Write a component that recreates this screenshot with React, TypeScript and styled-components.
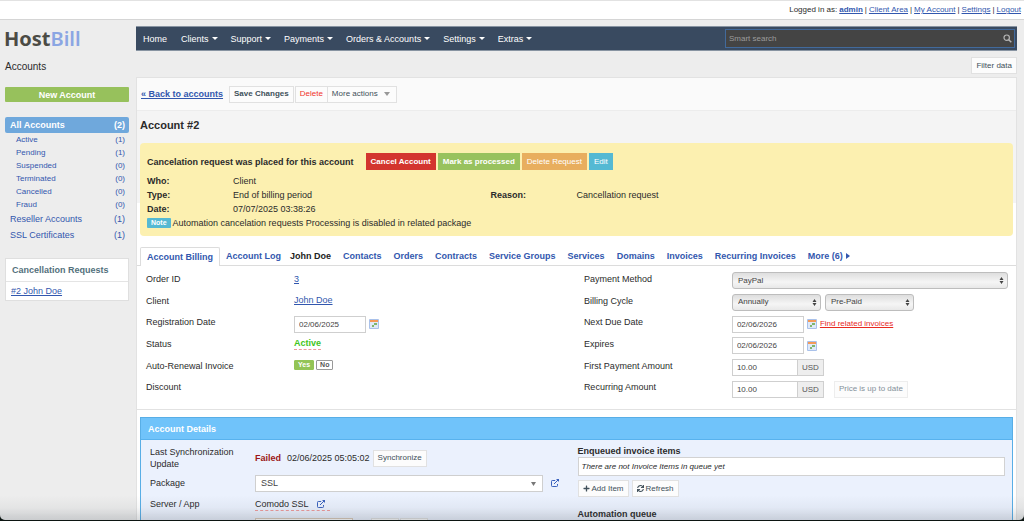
import React from "react";
import styled, { createGlobalStyle, css } from "styled-components";
import { FaPlus, FaSync } from "react-icons/fa";

const GlobalStyle = createGlobalStyle`
  * { box-sizing: border-box; }
  html, body { margin: 0; padding: 0; }
  body {
    background: #ededed;
    color: #2b2b2b;
    font: 9px/12px "Liberation Sans", Arial, sans-serif;
  }
  button, input, select { font: inherit; margin: 0; }
  a { color: #3257ae; }
`;

const Page = styled.div`
  display: flex;
  flex-direction: column;
  height: 100vh;
  overflow: hidden;
`;

const TopBar = styled.header`
  flex: none;
  display: flex;
  justify-content: flex-end;
  gap: 2px;
  height: 20px;
  padding: 3px 3px 0 0;
  background: #fff;
  border-top: 1px solid #e2e2e2;
  border-bottom: 1px solid #d5d5d5;
  font-size: 8px;
`;

const Columns = styled.div`
  display: flex;
  flex: 1;
  min-height: 0;
`;

const Sidebar = styled.aside`
  flex: none;
  width: 136px;
  padding: 7px 7px 0 5px;
`;

const Logo = styled.div`
  height: 24px;
  margin-left: -1px;
  color: #4b4b45;
  font: 700 20px/24px "Noto Sans", "Open Sans", sans-serif;
  span { color: #8ba6e3; font-weight: 600; }
`;

const SideTitle = styled.h2`
  margin: 10px 0 14px;
  font-size: 10px;
  line-height: 12px;
  font-weight: 400;
`;

const NewAccount = styled.button`
  display: block;
  width: 100%;
  height: 15px;
  padding: 0;
  border: 0;
  border-radius: 1px;
  background: #97c15c;
  color: #fff;
  font-weight: 700;
`;

const SideNav = styled.nav`
  margin-top: 15px;
`;

const SideLink = styled.a<{ $kind: "active" | "sub" | "top" }>`
  display: flex;
  justify-content: space-between;
  align-items: center;
  padding: 0 4px 0 5px;
  height: 16px;
  text-decoration: none;
  ${(p) => p.$kind === "active" && css`
    background: #6fa8dc;
    color: #fff;
    font-weight: 700;
    border-radius: 2px;
  `}
  ${(p) => p.$kind === "sub" && css`
    height: 13px;
    padding-left: 11px;
    font-size: 8px;
  `}
`;

const RequestCard = styled.section`
  margin-top: 15px;
  border: 1px solid #dfdfdf;
  background: #fff;
  h3 {
    margin: 0;
    padding: 5px 6px;
    color: #53707c;
    font-size: 9px;
    line-height: 12px;
    border-bottom: 1px solid #e4e4e4;
  }
  a { display: block; padding: 3px 5px; }
`;

const Main = styled.main`
  flex: 1;
  min-width: 0;
  display: flex;
  flex-direction: column;
  padding: 6px 7px 0 0;
`;

const NavBar = styled.nav`
  flex: none;
  display: flex;
  align-items: center;
  height: 25px;
  padding: 0 2px 0 7px;
  background: #394a60;
  border-top: 1px solid #8894a2;
  border-bottom: 1px solid #8894a2;
`;

const NavLink = styled.a`
  display: flex;
  align-items: center;
  gap: 3px;
  margin-right: 13px;
  color: #fff;
  text-decoration: none;
  white-space: nowrap;
  &:first-child { margin-right: 14px; }
`;

const Caret = styled.span`
  border: 3px solid transparent;
  border-top-color: currentColor;
  border-bottom: 0;
`;

const SearchBox = styled.label`
  display: flex;
  align-items: center;
  width: 290px;
  height: 19px;
  margin-left: auto;
  padding: 0 2px 0 3px;
  background: #444;
  border: 1px solid #426a9c;
  color: #b5b5b5;
  input {
    flex: 1;
    min-width: 0;
    padding: 0;
    border: 0;
    outline: 0;
    background: transparent;
    color: #ccc;
    font-size: 8px;
  }
  input::placeholder { color: #9c9c9c; opacity: 1; }
`;

const FilterRow = styled.div`
  flex: none;
  display: flex;
  justify-content: flex-end;
  padding: 6px 0 3px;
`;

const Button = styled.button<{ $tone?: "bold" | "danger" | "muted" | "menu" }>`
  display: inline-flex;
  align-items: center;
  justify-content: center;
  gap: 2px;
  height: 17px;
  padding: 0 4px;
  background: #fcfcfc;
  border: 1px solid #e1e1e1;
  color: #40505a;
  font-size: 8px;
  white-space: nowrap;
  ${(p) => p.$tone === "bold" && css`font-weight: 700;`}
  ${(p) => p.$tone === "danger" && css`color: #f0322b;`}
  ${(p) => p.$tone === "muted" && css`color: #84909a; border-color: #ededed;`}
  ${(p) => p.$tone === "menu" && css`gap: 6px; padding-right: 6px; margin-left: -1px;`}
`;

const GreyCaret = styled.span`
  border: 3px solid transparent;
  border-top: 4px solid #999;
  border-bottom: 0;
`;

const Panel = styled.div`
  flex: 1;
  min-height: 0;
  background: #fff;
  border: 1px solid #e2e2e2;
  border-bottom: 0;
`;

const Toolbar = styled.div`
  display: flex;
  align-items: center;
  height: 33px;
  padding: 0 4px;
  background: #fafafa;
  border-bottom: 1px solid #ececec;
`;

const BackLink = styled.a`
  margin-right: 6px;
  font-weight: 700;
`;

const ButtonGroup = styled.div`
  display: flex;
  margin-left: 1px;
`;

const Intro = styled.div`
  padding: 0 3px;
  background: linear-gradient(#f4f4f4 92px, #fff 92px);
`;

const Title = styled.h1`
  margin: 0;
  padding: 7px 0 11px;
  font-size: 11px;
  line-height: 14px;
`;

const Notice = styled.section`
  height: 93px;
  padding: 10px 7px 0;
  background: #fcf0b0;
  border-radius: 4px;
`;

const NoticeHead = styled.div`
  display: flex;
  align-items: center;
  gap: 2px;
  margin-bottom: 4px;
  strong { margin-right: 10px; }
`;

const SolidButton = styled.button<{ $color: string; $bold?: boolean }>`
  height: 17px;
  padding: 0 5px;
  border: 0;
  background: ${(p) => p.$color};
  color: #fff;
  font-size: 8px;
  font-weight: ${(p) => (p.$bold ? 700 : 400)};
`;

const Facts = styled.dl`
  display: grid;
  grid-template-columns: 10fr 30fr 10fr 50fr;
  grid-auto-rows: 14px;
  align-items: center;
  margin: 0;
  dt { font-weight: 700; }
  dd { margin: 0; }
  dd[data-wide] { grid-column: 2 / -1; }
`;

const Note = styled.p`
  display: flex;
  align-items: center;
  gap: 2px;
  height: 14px;
  margin: 0;
  span {
    padding: 0 4px;
    background: #55b9d3;
    border-radius: 1px;
    color: #fff;
    font-weight: 700;
    font-size: 7px;
    line-height: 10px;
  }
`;

const Tabs = styled.nav`
  display: flex;
  align-items: center;
  height: 19px;
  margin-top: 11px;
  padding-left: 3px;
  border-bottom: 1px solid #dcdcdc;
`;

const Tab = styled.a<{ $state?: "current" | "tight" | "plain" }>`
  display: flex;
  align-items: center;
  gap: 3px;
  margin-right: 12px;
  font-weight: 700;
  text-decoration: none;
  white-space: nowrap;
  ${(p) => p.$state === "plain" && css`color: #222;`}
  ${(p) => p.$state === "tight" && css`margin-right: 9px;`}
  ${(p) => p.$state === "current" && css`
    height: 19px;
    margin: 0 6px -1px 0;
    padding: 0 6px;
    background: #fff;
    border: 1px solid #dcdcdc;
    border-bottom: 0;
    border-radius: 2px 2px 0 0;
  `}
`;

const Billing = styled.form`
  display: grid;
  grid-template-columns: 103fr 100fr;
  padding: 2px 7px 11px 9px;
  border-bottom: 1px solid #e2e2e2;
`;

const FieldList = styled.div`
  display: grid;
  grid-template-columns: 148px minmax(0, 1fr);
  grid-template-rows: repeat(6, 1fr);
  height: 130px;
`;

const FieldLabel = styled.label`
  align-self: start;
  padding-top: 5px;
`;

const Field = styled.div<{ $text?: boolean }>`
  display: flex;
  align-items: center;
  gap: 3px;
  padding-top: ${(p) => (p.$text ? 0 : 4)}px;
`;

const TextInput = styled.input`
  width: 72px;
  height: 17px;
  padding: 0 4px;
  border: 1px solid #cfcfcf;
  background: #fff;
  color: #444;
  font-size: 8px;
`;

const SelectWrap = styled.span<{ $grow?: boolean; $white?: boolean }>`
  position: relative;
  display: block;
  flex: ${(p) => (p.$grow ? "1" : "none")};
  width: 89px;
  margin-right: 1px;
  height: 17px;
  svg { position: absolute; right: 4px; top: 4px; pointer-events: none; }
  select {
    appearance: none;
    display: block;
    width: 100%;
    height: 17px;
    padding: 0 5px;
    border: 1px solid ${(p) => (p.$white ? "#cfcfcf" : "#bdbdbd")};
    border-radius: ${(p) => (p.$white ? 0 : 3)}px;
    background: ${(p) => (p.$white ? "#fff" : "linear-gradient(#dedede, #f5f5f5 60%, #e8e8e8)")};
    color: #444;
    font-size: ${(p) => (p.$white ? 9 : 8)}px;
  }
`;

const Amount = styled.div`
  display: flex;
  margin-right: 7px;
  ${TextInput} { width: 66px; }
  span {
    width: 27px;
    height: 17px;
    margin-left: -1px;
    border: 1px solid #cfcfcf;
    background: #eee;
    color: #555;
    font-size: 8px;
    line-height: 15px;
    text-align: center;
  }
`;

const RelatedLink = styled.a`
  color: #e8291f;
  font-size: 8px;
`;

const Status = styled.strong`
  color: #3fc51d;
  border-bottom: 1px dashed #ee9a9a;
`;

const Toggle = styled.button<{ $on?: boolean }>`
  height: 10px;
  margin-right: -1px;
  padding: 0 3px;
  border: 1px solid ${(p) => (p.$on ? "#93c456" : "#999")};
  border-radius: 1px;
  background: ${(p) => (p.$on ? "#93c456" : "#fff")};
  color: ${(p) => (p.$on ? "#fff" : "#555")};
  font-size: 7px;
  line-height: 8px;
  font-weight: 700;
`;

const Details = styled.section`
  margin: 7px 3px 0;
  background: #ebf1fd;
  border: 1px solid #58aee6;
  h2 {
    margin: 0;
    padding: 5px 7px 4px;
    background: #70c3fa;
    border-bottom: 1px solid #58b2ee;
    color: #fff;
    font-size: 9px;
    line-height: 12px;
  }
`;

const DetailsBody = styled.div`
  display: grid;
  grid-template-columns: 1fr 1fr;
  align-items: start;
  padding: 5px 7px 8px 9px;
`;

const DetailRows = styled.div`
  display: grid;
  grid-template-columns: 105px minmax(0, 1fr);
  grid-template-rows: 26px 24px 18px 22px;
  align-items: center;
  margin-right: 19px;
`;

const DetailValue = styled.div`
  display: flex;
  align-items: center;
  gap: 3px;
`;

const OpenLink = styled.a`
  display: flex;
  margin-left: 4px;
`;

const Failed = styled.strong`
  margin-right: 3px;
  color: #9b1717;
`;

const Server = styled.span`
  display: flex;
  align-items: center;
  gap: 8px;
  padding-right: 5px;
  border-bottom: 1px dashed #ee9a9a;
`;

const CredentialRow = styled.div`
  grid-column: 2;
  align-self: end;
  display: flex;
  ${TextInput} { width: 98px; margin-right: 18px; border-color: #d9c9b8; }
  ${Button} { width: 28px; margin-right: 1px; }
`;

const Queue = styled.div`
  h3 { margin: 0; font-size: 9px; line-height: 12px; }
`;

const EmptyQueue = styled.div`
  height: 19px;
  margin: 0 0 4px;
  padding: 0 3px;
  background: #fff;
  border: 1px solid #d2d2d2;
  font-size: 8px;
  font-style: italic;
  line-height: 17px;
`;

const QueueActions = styled.div`
  display: flex;
  gap: 3px;
  margin-bottom: 11px;
`;

const BottomShade = styled.div`
  position: fixed;
  inset: auto 0 1px;
  height: 24px;
  border-radius: 0 0 5px 5px;
  background: linear-gradient(transparent, rgba(60, 70, 80, 0.05) 50%, rgba(60, 70, 80, 0.2));
  box-shadow: 0 6px 0 #0c1512;
  pointer-events: none;
`;

const CalendarIcon = () => (
  <svg width="10" height="10" viewBox="0 0 10 10" aria-hidden="true">
    <rect width="10" height="10" rx="1" fill="#a9c1ea" />
    <rect x="1" y="1" width="8" height="8" fill="#dfe9f8" />
    <rect x="1" y="1" width="8" height="2" fill="#f49a58" />
    <rect x="5" y="4" width="3" height="2" fill="#7fb56e" />
    <rect x="3" y="6" width="2" height="2" fill="#7fb56e" />
  </svg>
);

const ExternalIcon = () => (
  <svg width="8" height="8" viewBox="0 0 8 8" fill="none" stroke="#3b62bd" aria-hidden="true">
    <path d="M4.200 1.500H1.300Q.5 1.500.5 2.300v4.400q0 .8.8.8h4.400q.8 0 .8-.8V5M3 5 7 1" />
    <path d="M5 0h3v3z" fill="#3b62bd" stroke="none" />
  </svg>
);

const UpDownIcon = () => (
  <svg width="5" height="9" viewBox="0 0 5 9" fill="#444" aria-hidden="true">
    <path d="M2.500 1 4.500 4h-4zM2.500 8 .5 5h4z" />
  </svg>
);

const DownIcon = () => (
  <svg width="10" height="9" viewBox="0 0 10 9" fill="#777" aria-hidden="true">
    <path d="M2 3h5L4.500 7z" />
  </svg>
);

const SearchIcon = () => (
  <svg width="9" height="9" viewBox="0 0 9 9" fill="none" stroke="currentColor" aria-hidden="true">
    <circle cx="3.700" cy="3.700" r="2.700" strokeWidth="1.200" />
    <path d="m5.700 5.700 2.600 2.600" strokeWidth="1.500" />
  </svg>
);

type SelectProps = { id: string; value: string; label?: string; grow?: boolean; white?: boolean };

const Select = ({ id, value, label, grow, white }: SelectProps) => (
  <SelectWrap $grow={grow} $white={white}>
    <select id={id} aria-label={label} defaultValue={value}>
      <option>{value}</option>
    </select>
    {white ? <DownIcon /> : <UpDownIcon />}
  </SelectWrap>
);

const accountLinks: { name: string; count: number; kind: "active" | "sub" | "top" }[] = [
  { name: "All Accounts", count: 2, kind: "active" },
  { name: "Active", count: 1, kind: "sub" },
  { name: "Pending", count: 1, kind: "sub" },
  { name: "Suspended", count: 0, kind: "sub" },
  { name: "Terminated", count: 0, kind: "sub" },
  { name: "Cancelled", count: 0, kind: "sub" },
  { name: "Fraud", count: 0, kind: "sub" },
  { name: "Reseller Accounts", count: 1, kind: "top" },
  { name: "SSL Certificates", count: 1, kind: "top" },
];

const menu = ["Clients", "Support", "Payments", "Orders & Accounts", "Settings", "Extras"];
const tabs = ["Contacts", "Orders", "Contracts", "Service Groups", "Services", "Domains", "Invoices", "Recurring Invoices"];

export default function App() {
  return (
    <Page>
      <GlobalStyle />
      <TopBar>
        <span>Logged in as:</span>
        <a href="#admin"><b>admin</b></a>|<a href="#client">Client Area</a>|
        <a href="#account">My Account</a>|<a href="#settings">Settings</a>|
        <a href="#logout">Logout</a>
      </TopBar>
      <Columns>
        <Sidebar>
          <Logo>Host<span>Bill</span></Logo>
          <SideTitle>Accounts</SideTitle>
          <NewAccount type="button">New Account</NewAccount>
          <SideNav>
            {accountLinks.map((l) => (
              <SideLink key={l.name} href="#list" $kind={l.kind}>
                <span>{l.name}</span>
                <span>({l.count})</span>
              </SideLink>
            ))}
          </SideNav>
          <RequestCard>
            <h3>Cancellation Requests</h3>
            <a href="#request">#2 John Doe</a>
          </RequestCard>
        </Sidebar>
        <Main>
          <NavBar>
            <NavLink href="#home">Home</NavLink>
            {menu.map((m) => (
              <NavLink key={m} href="#menu">{m}<Caret /></NavLink>
            ))}
            <SearchBox>
              <input type="text" placeholder="Smart search" aria-label="Smart search" />
              <SearchIcon />
            </SearchBox>
          </NavBar>
          <FilterRow><Button type="button">Filter data</Button></FilterRow>
          <Panel>
            <Toolbar>
              <BackLink href="#back">« Back to accounts</BackLink>
              <Button type="button" $tone="bold">Save Changes</Button>
              <ButtonGroup>
                <Button type="button" $tone="danger">Delete</Button>
                <Button type="button" $tone="menu">More actions<GreyCaret /></Button>
              </ButtonGroup>
            </Toolbar>
            <Intro>
              <Title>Account #2</Title>
              <Notice>
                <NoticeHead>
                  <strong>Cancelation request was placed for this account</strong>
                  <SolidButton type="button" $color="#d3352f" $bold>Cancel Account</SolidButton>
                  <SolidButton type="button" $color="#98c25e" $bold>Mark as processed</SolidButton>
                  <SolidButton type="button" $color="#e8ae5e">Delete Request</SolidButton>
                  <SolidButton type="button" $color="#55b9d3">Edit</SolidButton>
                </NoticeHead>
                <Facts>
                  <dt>Who:</dt><dd data-wide>Client</dd>
                  <dt>Type:</dt><dd>End of billing period</dd>
                  <dt>Reason:</dt><dd>Cancellation request</dd>
                  <dt>Date:</dt><dd data-wide>07/07/2025 03:38:26</dd>
                </Facts>
                <Note><span>Note</span>Automation cancelation requests Processing is disabled in related package</Note>
              </Notice>
            </Intro>
            <Tabs>
              <Tab href="#billing" $state="current">Account Billing</Tab>
              <Tab href="#log" $state="tight">Account Log</Tab>
              <Tab href="#john" $state="plain">John Doe</Tab>
              {tabs.map((t) => <Tab key={t} href="#tab">{t}</Tab>)}
              <Tab href="#more">
                More (6)
                <svg width="4" height="6" viewBox="0 0 4 6" fill="currentColor" aria-hidden="true"><path d="M0 0 4 3 0 6z" /></svg>
              </Tab>
            </Tabs>
            <Billing>
              <FieldList>
                <FieldLabel as="span">Order ID</FieldLabel>
                <Field $text><a href="#order">3</a></Field>
                <FieldLabel as="span">Client</FieldLabel>
                <Field $text><a href="#client">John Doe</a></Field>
                <FieldLabel htmlFor="registered">Registration Date</FieldLabel>
                <Field><TextInput id="registered" defaultValue="02/06/2025" /><CalendarIcon /></Field>
                <FieldLabel as="span">Status</FieldLabel>
                <Field $text><Status>Active</Status></Field>
                <FieldLabel as="span">Auto-Renewal Invoice</FieldLabel>
                <Field $text><Toggle type="button" $on>Yes</Toggle><Toggle type="button">No</Toggle></Field>
                <FieldLabel as="span">Discount</FieldLabel>
                <Field />
              </FieldList>
              <FieldList>
                <FieldLabel htmlFor="method">Payment Method</FieldLabel>
                <Field><Select id="method" value="PayPal" grow /></Field>
                <FieldLabel htmlFor="cycle">Billing Cycle</FieldLabel>
                <Field>
                  <Select id="cycle" value="Annually" />
                  <Select id="prepaid" value="Pre-Paid" label="Billing type" />
                </Field>
                <FieldLabel htmlFor="due">Next Due Date</FieldLabel>
                <Field>
                  <TextInput id="due" defaultValue="02/06/2026" /><CalendarIcon />
                  <RelatedLink href="#related">Find related invoices</RelatedLink>
                </Field>
                <FieldLabel htmlFor="expires">Expires</FieldLabel>
                <Field><TextInput id="expires" defaultValue="02/06/2026" /><CalendarIcon /></Field>
                <FieldLabel htmlFor="first">First Payment Amount</FieldLabel>
                <Field><Amount><TextInput id="first" defaultValue="10.00" /><span>USD</span></Amount></Field>
                <FieldLabel htmlFor="recurring">Recurring Amount</FieldLabel>
                <Field>
                  <Amount><TextInput id="recurring" defaultValue="10.00" /><span>USD</span></Amount>
                  <Button type="button" $tone="muted">Price is up to date</Button>
                </Field>
              </FieldList>
            </Billing>
            <Details>
              <h2>Account Details</h2>
              <DetailsBody>
                <DetailRows>
                  <span>Last Synchronization Update</span>
                  <DetailValue>
                    <Failed>Failed</Failed>02/06/2025 05:05:02
                    <Button type="button">Synchronize</Button>
                  </DetailValue>
                  <label htmlFor="package">Package</label>
                  <DetailValue>
                    <Select id="package" value="SSL" grow white />
                    <OpenLink href="#package" aria-label="Open package"><ExternalIcon /></OpenLink>
                  </DetailValue>
                  <span>Server / App</span>
                  <DetailValue><Server>Comodo SSL <ExternalIcon /></Server></DetailValue>
                  <CredentialRow>
                    <TextInput aria-label="Username" />
                    <Button type="button" aria-label="Generate" />
                    <Button type="button" aria-label="Copy" />
                  </CredentialRow>
                </DetailRows>
                <Queue>
                  <h3>Enqueued invoice items</h3>
                  <EmptyQueue>There are not Invoice Items in queue yet</EmptyQueue>
                  <QueueActions>
                    <Button type="button"><FaPlus size={7} />Add Item</Button>
                    <Button type="button"><FaSync size={7} />Refresh</Button>
                  </QueueActions>
                  <h3>Automation queue</h3>
                </Queue>
              </DetailsBody>
            </Details>
          </Panel>
        </Main>
      </Columns>
      <BottomShade />
    </Page>
  );
}
